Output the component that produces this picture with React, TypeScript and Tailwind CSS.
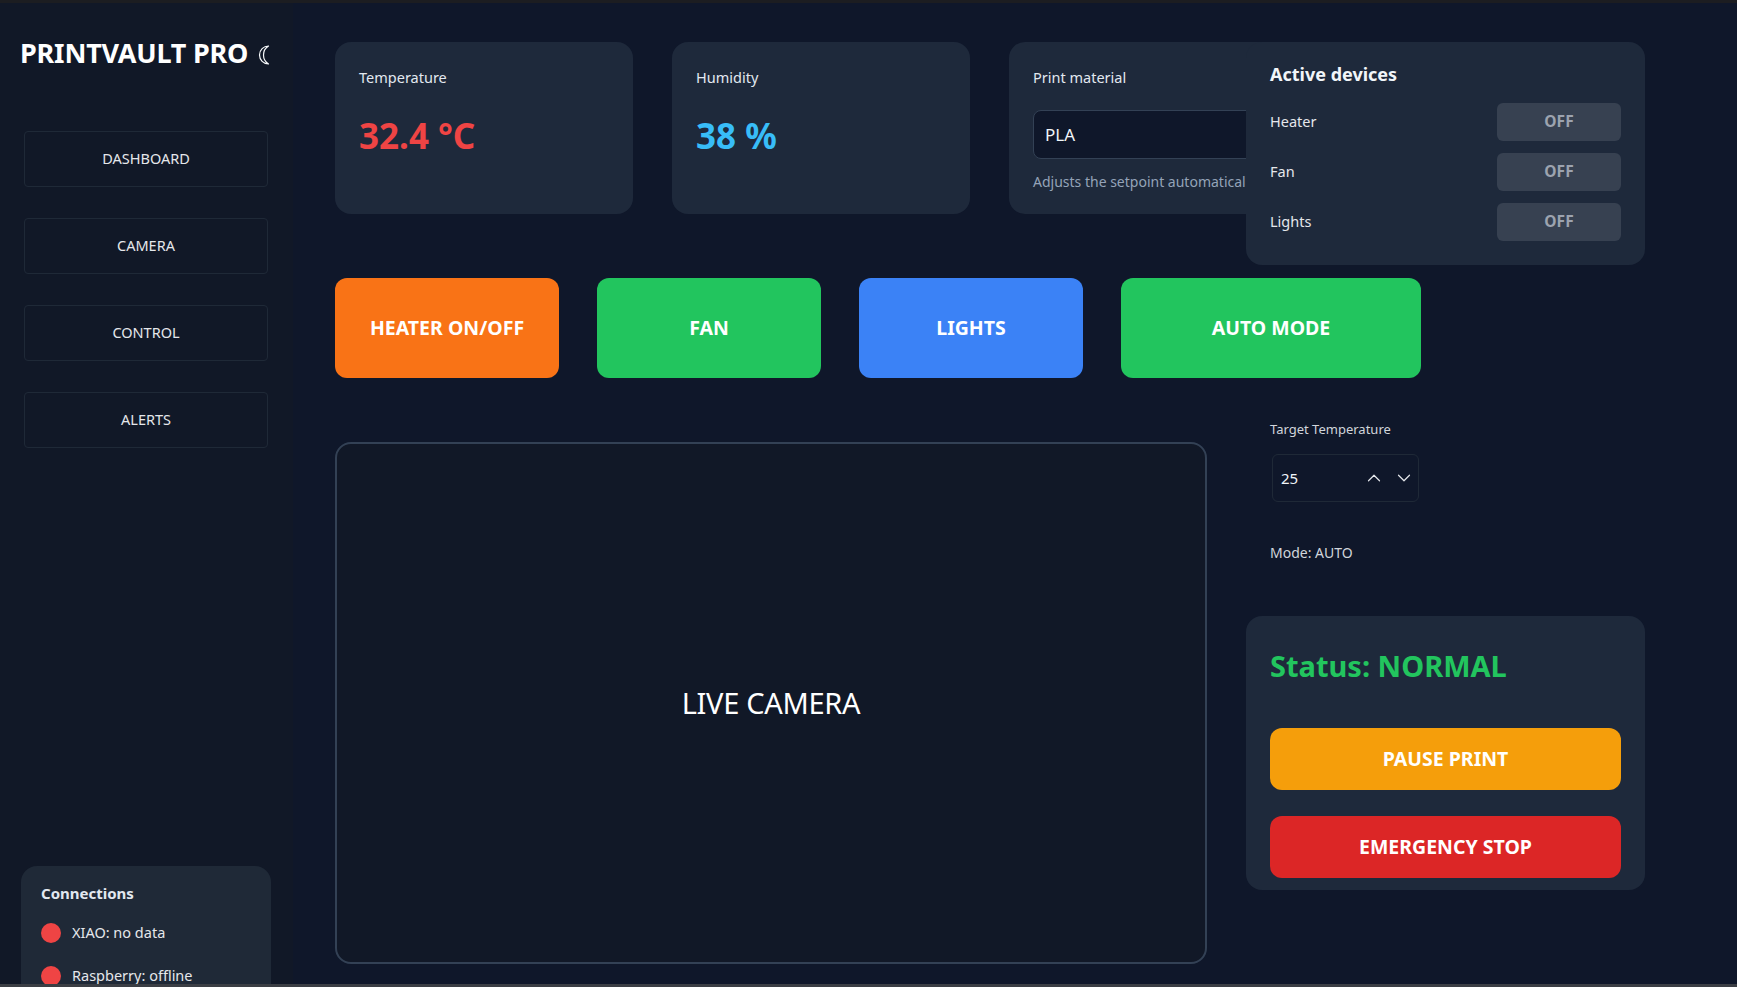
import { ChevronDown, ChevronUp } from "lucide-react";

const NAV = ["DASHBOARD", "CAMERA", "CONTROL", "ALERTS"];
const DEVICES = ["Heater", "Fan", "Lights"];
const CONNECTIONS = ["XIAO: no data", "Raspberry: offline"];

const CONTROLS = [
  { label: "HEATER ON/OFF", cls: "w-[224px] bg-[#f97316]" },
  { label: "FAN", cls: "w-[224px] bg-[#22c55e]" },
  { label: "LIGHTS", cls: "w-[224px] bg-[#3b82f6]" },
  { label: "AUTO MODE", cls: "w-[300px] bg-[#22c55e]" },
];

function Moon() {
  return (
    <svg width="13" height="20" viewBox="0 0 13 20" className="ml-[9px] mt-[3px]">
      <path
        d="M11.5 1 A9 9 0 0 0 11.5 19 A10.6 10.6 0 0 1 11.5 1 Z"
        fill="none"
        stroke="#f8fafc"
        strokeWidth="1.2"
        strokeLinejoin="round"
      />
    </svg>
  );
}

function Sidebar() {
  return (
    <aside className="w-[293px] shrink-0 bg-[#111827] px-5 pt-[33px]">
      <div className="flex items-center">
        <h1 className="text-[27px] leading-[34px] font-bold text-white tracking-[-0.2px]">
          PRINTVAULT PRO
        </h1>
        <Moon />
      </div>
      <nav className="mt-[61px] ml-1 flex flex-col gap-[31px]">
        {NAV.map((n) => (
          <button
            key={n}
            className="w-[244px] h-14 rounded border border-[#1f2937] text-[14.5px] text-[#e5e7eb]"
          >
            {n}
          </button>
        ))}
      </nav>
      <div className="mt-[418px] ml-px w-[250px] rounded-2xl bg-[#1f2937] px-5 pt-4 pb-5">
        <p className="text-[15px] leading-[22px] font-bold text-[#e2e8f0]">Connections</p>
        <div className="mt-[19px] flex flex-col gap-[23px]">
          {CONNECTIONS.map((c) => (
            <div key={c} className="flex items-center h-5 gap-[11px]">
              <span className="h-5 w-5 rounded-full bg-[#ef4444]" />
              <span className="text-[14.5px] text-[#e5e7eb]">{c}</span>
            </div>
          ))}
        </div>
      </div>
    </aside>
  );
}

function StatCard({ label, value, color }: { label: string; value: string; color: string }) {
  return (
    <div className="w-[298px] h-[172px] shrink-0 rounded-2xl bg-[#1e293b] p-6">
      <p className="text-[14.5px] leading-[22px] text-[#e2e8f0]">{label}</p>
      <p className={`mt-7 text-[35px] leading-10 font-bold ${color}`}>{value}</p>
    </div>
  );
}

export default function App() {
  return (
    <div className="h-screen flex flex-col bg-[#0f172a] font-['Noto_Sans','Open_Sans',sans-serif] overflow-hidden">
      <div className="h-[3px] shrink-0 bg-[#1c1d21]" />
      <div className="flex flex-1 overflow-hidden">
        <Sidebar />
        <main className="flex-1 flex gap-[39px] pl-[42px] pt-[39px]">
          <div className="w-[872px] shrink-0">
            <div className="flex gap-[39px]">
              <StatCard label="Temperature" value="32.4 °C" color="text-[#ef4444]" />
              <StatCard label="Humidity" value="38 %" color="text-[#38bdf8]" />
              <div className="w-[298px] h-[172px] shrink-0 rounded-2xl bg-[#1e293b] p-6">
                <p className="text-[14.5px] leading-[22px] text-[#e2e8f0]">Print material</p>
                <input
                  readOnly
                  value="PLA"
                  className="mt-[22px] w-full h-[49px] rounded-lg border border-[#334155] bg-[#0f172a] px-[11px] text-[17px] text-[#f1f5f9] outline-none"
                />
                <p className="mt-[13px] text-[14px] leading-5 text-[#94a3b8] whitespace-nowrap">
                  Adjusts the setpoint automatically.
                </p>
              </div>
            </div>

            <div className="mt-16 flex gap-[38px]">
              {CONTROLS.map((c) => (
                <button
                  key={c.label}
                  className={`h-[100px] shrink-0 rounded-xl text-[19.5px] font-bold text-white ${c.cls}`}
                >
                  {c.label}
                </button>
              ))}
            </div>

            <div className="mt-16 h-[522px] rounded-2xl border-2 border-[#334155] bg-[#111827] flex items-center justify-center">
              <span className="text-[29px] text-white tracking-[-0.3px]">LIVE CAMERA</span>
            </div>
          </div>

          <div className="w-[399px] shrink-0 relative z-10">
            <div className="rounded-2xl bg-[#1e293b] px-6 pt-[18px] pb-6">
              <h3 className="text-[18px] leading-7 font-bold text-[#f1f5f9]">Active devices</h3>
              <div className="mt-[15px] flex flex-col gap-3">
                {DEVICES.map((d) => (
                  <div key={d} className="flex items-center justify-between">
                    <span className="text-[14.5px] text-[#e5e7eb]">{d}</span>
                    <button className="w-[124px] h-[38px] rounded-md bg-[#374151] text-[15.5px] font-bold text-[#9ca3af]">
                      OFF
                    </button>
                  </div>
                ))}
              </div>
            </div>

            <div className="px-6 mt-[154px]">
              <p className="text-[13px] leading-5 text-[#d1d5db]">Target Temperature</p>
              <div className="mt-[15px] ml-[2px] w-[147px] h-[48px] rounded-md border border-[#1f2937] flex items-center pl-2 pr-[3px]">
                <span className="flex-1 text-[15px] text-[#f1f5f9]">25</span>
                <ChevronUp size={22} strokeWidth={1.3} className="text-[#e5e7eb]" />
                <ChevronDown size={22} strokeWidth={1.3} className="ml-[8px] text-[#e5e7eb]" />
              </div>
              <p className="mt-10 text-[14px] leading-[22px] text-[#d1d5db]">Mode: AUTO</p>
            </div>

            <div className="mt-[52px] rounded-2xl bg-[#1e293b] px-6 pt-8 pb-3">
              <h2 className="text-[29px] leading-9 font-bold text-[#22c55e]">Status: NORMAL</h2>
              <button className="mt-[44px] w-full h-[62px] rounded-xl bg-[#f59e0b] text-[19.5px] font-bold text-white">
                PAUSE PRINT
              </button>
              <button className="mt-[26px] w-full h-[62px] rounded-xl bg-[#dc2626] text-[19.5px] font-bold text-white">
                EMERGENCY STOP
              </button>
            </div>
          </div>
        </main>
      </div>
      <div className="h-[3px] shrink-0 bg-[#3b3e44]" />
    </div>
  );
}
